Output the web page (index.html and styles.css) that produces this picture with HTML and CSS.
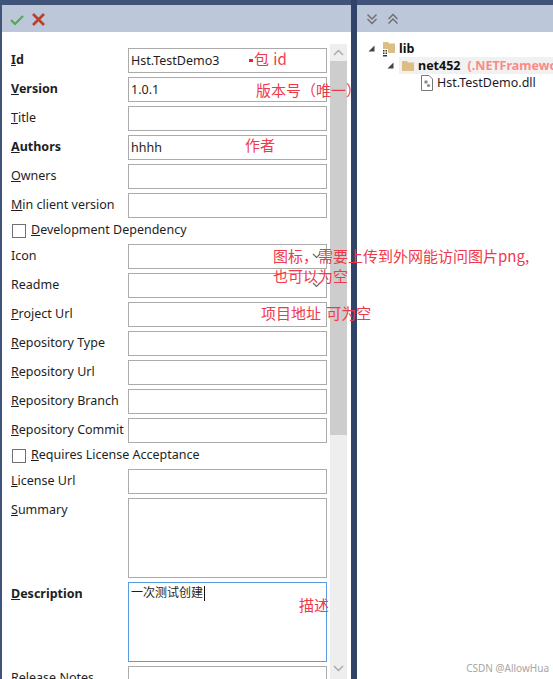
FILE: index.html
```html
<!doctype html>
<html lang="en">
  <head>
    <meta charset="UTF-8" />
    <title>Package Metadata</title>
    <link rel="stylesheet" href="styles.css">
  </head>
  <body>
    <div class="window">
      <div class="pane pane-left">
        <div class="toolbar">
          <svg class="tool" width="14" height="14" viewBox="0 0 14 14"><path d="M1 8 L5 12 L13 4" fill="none" stroke="#52a84e" stroke-width="2"/></svg>
          <svg class="tool" width="14" height="14" viewBox="0 0 14 14"><path d="M2 2 L13 13 M13 2 L2 13" fill="none" stroke="#b5402c" stroke-width="2.6"/></svg>
        </div>
        <div class="pane-body">
          <form class="form">
            <div class="row"><label class="bold"><u>I</u>d</label><div class="input">Hst.TestDemo3</div></div>
            <div class="row"><label class="bold"><u>V</u>ersion</label><div class="input">1.0.1</div></div>
            <div class="row"><label><u>T</u>itle</label><div class="input"></div></div>
            <div class="row"><label class="bold"><u>A</u>uthors</label><div class="input">hhhh</div></div>
            <div class="row"><label><u>O</u>wners</label><div class="input"></div></div>
            <div class="row"><label><u>M</u>in client version</label><div class="input"></div></div>
            <div class="check-row"><span class="checkbox"></span><label><u>D</u>evelopment Dependency</label></div>
            <div class="row"><label>Icon</label><div class="input input-drop"><svg width="9" height="6" viewBox="0 0 9 6"><path d="M1 1 L4.5 4.5 L8 1" fill="none" stroke="#666" stroke-width="1.2"/></svg></div></div>
            <div class="row"><label>Readme</label><div class="input input-drop"><svg width="9" height="6" viewBox="0 0 9 6"><path d="M1 1 L4.5 4.5 L8 1" fill="none" stroke="#666" stroke-width="1.2"/></svg></div></div>
            <div class="row"><label><u>P</u>roject Url</label><div class="input"></div></div>
            <div class="row"><label><u>R</u>epository Type</label><div class="input"></div></div>
            <div class="row"><label><u>R</u>epository Url</label><div class="input"></div></div>
            <div class="row"><label><u>R</u>epository Branch</label><div class="input"></div></div>
            <div class="row"><label><u>R</u>epository Commit</label><div class="input"></div></div>
            <div class="check-row"><span class="checkbox"></span><label><u>R</u>equires License Acceptance</label></div>
            <div class="row"><label><u>L</u>icense Url</label><div class="input"></div></div>
            <div class="row tall"><label><u>S</u>ummary</label><div class="input"></div></div>
            <div class="row tall"><label class="bold"><u>D</u>escription</label><div class="input focused"><span class="cjk">一次测试创建</span><span class="caret"></span></div></div>
            <div class="row"><label>Release Notes</label><div class="input"></div></div>
          </form>
          <div class="scrollbar">
            <div class="arrow"><svg width="11" height="7" viewBox="0 0 11 7"><path d="M1 6 L5.5 1.5 L10 6" fill="none" stroke="#a8a8a8" stroke-width="1.4"/></svg></div>
            <div class="thumb"></div>
            <div class="arrow arrow-down"><svg width="11" height="7" viewBox="0 0 11 7"><path d="M1 1 L5.5 5.5 L10 1" fill="none" stroke="#a8a8a8" stroke-width="1.4"/></svg></div>
          </div>
        </div>
      </div>

      <div class="splitter"></div>

      <div class="pane pane-right">
        <div class="toolbar toolbar-right">
          <svg class="tool" width="12" height="12" viewBox="0 0 12 12"><path d="M1.5 1.5 L6 6 L10.5 1.5 M1.5 6 L6 10.5 L10.5 6" fill="none" stroke="#6d6d6d" stroke-width="1.4"/></svg>
          <svg class="tool" width="12" height="12" viewBox="0 0 12 12"><path d="M1.5 6 L6 1.5 L10.5 6 M1.5 10.5 L6 6 L10.5 10.5" fill="none" stroke="#6d6d6d" stroke-width="1.4"/></svg>
        </div>
        <ul class="tree">
          <li class="node">
            <svg class="twist" width="7" height="7" viewBox="0 0 7 7"><path d="M6.5 0.5 V6.5 H0.5 Z" fill="#444"/></svg>
            <svg class="folder" width="14" height="18" viewBox="0 0 14 18"><path d="M1 2 H6 L7 3.5 H13 V13 H1 Z" fill="#dcbd84"/><rect x="0" y="9" width="6" height="8" fill="#fff"/><rect x="1" y="10" width="1.5" height="1.5" fill="#333"/><rect x="3.5" y="10" width="1.5" height="1.5" fill="#333"/><rect x="1" y="12.5" width="1.5" height="1.5" fill="#333"/><rect x="3.5" y="12.5" width="1.5" height="1.5" fill="#333"/><rect x="1" y="15" width="4" height="1.5" fill="#333"/></svg>
            <span class="name">lib</span>
          </li>
          <li class="node node-framework">
            <svg class="twist" width="7" height="7" viewBox="0 0 7 7"><path d="M6.5 0.5 V6.5 H0.5 Z" fill="#444"/></svg>
            <div class="selected">
              <svg class="folder" width="14" height="12" viewBox="0 0 14 12"><path d="M1 1 H6 L7 2.5 H13 V11 H1 Z" fill="#dcbd84"/></svg>
              <span class="name">net452</span>
              <span class="framework">(.NETFramework,Version=v4.5.2)</span>
            </div>
          </li>
          <li class="node node-file">
            <svg class="file" width="12" height="16" viewBox="0 0 12 16"><path d="M0.5 0.5 H8 L11.5 4 V15.5 H0.5 Z" fill="#fff" stroke="#777"/><circle cx="5" cy="7" r="1.8" fill="#8a8f96"/><circle cx="7.5" cy="10.5" r="1.6" fill="#8a8f96"/></svg>
            <span class="file-name">Hst.TestDemo.dll</span>
          </li>
        </ul>
      </div>

      <span class="note note-id"><i class="dash"></i>包 id</span>
      <span class="note note-version">版本号（唯一）</span>
      <span class="note note-author">作者</span>
      <span class="note note-icon">图标，需要上传到外网能访问图片png,<br>也可以为空</span>
      <span class="note note-project">项目地址 可为空</span>
      <span class="note note-desc">描述</span>
      <span class="watermark">CSDN @AllowHua</span>
    </div>
  </body>
</html>
```

FILE: styles.css
```css
html,
body {
  margin: 0;
  height: 100%;
  overflow: hidden;
}
body {
  font-family: "Noto Sans", "Noto Sans CJK SC", sans-serif;
  font-size: 12.5px;
  color: #1e1e1e;
  background: #3f5478;
}
.window {
  position: relative;
  display: flex;
  width: 553px;
  height: 679px;
  overflow: hidden;
  background: #3f5478;
}
.pane {
  display: flex;
  flex-direction: column;
  margin-top: 5px;
  background: white;
  overflow: hidden;
}
.pane-left {
  width: 349px;
  margin-left: 2px;
}
.pane-right {
  flex: 1;
}
.splitter {
  width: 6px;
  background: #2f4468;
}
.toolbar {
  display: flex;
  align-items: center;
  gap: 7px;
  height: 27px;
  padding-left: 8px;
  background: #bcc7d9;
  flex-shrink: 0;
}
.toolbar-right {
  gap: 9px;
  padding-left: 9px;
}
.pane-body {
  display: flex;
  flex: 1;
  min-height: 0;
}
.form {
  display: flex;
  flex-direction: column;
  gap: 4px;
  width: 316px;
  height: 645px;
  padding: 16px 0 0 9px;
  overflow: hidden;
  flex-shrink: 0;
}
.row {
  display: flex;
  flex-shrink: 0;
  height: 25px;
}
.row.tall {
  height: 80px;
}
.row label {
  width: 117px;
  padding-top: 3px;
  flex-shrink: 0;
  white-space: nowrap;
}
.bold {
  font-weight: 700;
}
.input {
  flex: 1;
  box-sizing: border-box;
  padding: 3px 2px;
  border: 1px solid #ababab;
  background: white;
  white-space: nowrap;
}
.input-drop {
  display: flex;
  justify-content: flex-end;
  padding: 8px 5px 0 0;
}
.input.focused {
  border-color: #569de5;
  padding-top: 0;
}
.caret {
  display: inline-block;
  width: 1px;
  height: 15px;
  margin-left: 1px;
  vertical-align: middle;
  background: #111;
}
.cjk {
  font-family: "Noto Sans CJK SC", sans-serif;
  font-size: 12px;
}
.check-row {
  display: flex;
  flex-shrink: 0;
  align-items: center;
  height: 18px;
  padding-left: 1px;
}
.check-row label {
  margin-top: -4px;
  margin-left: -1px;
}
.checkbox {
  width: 12px;
  height: 12px;
  margin-right: 6px;
  border: 1px solid #707070;
  background: white;
}
.scrollbar {
  display: flex;
  flex-direction: column;
  width: 17px;
  margin: 12px 0 -2px 3px;
  background: #eeeeee;
}
.arrow {
  display: flex;
  align-items: center;
  justify-content: center;
  height: 17px;
  flex-shrink: 0;
}
.thumb {
  height: 374px;
  background: #cdcdcd;
  flex-shrink: 0;
}
.arrow-down {
  margin-top: auto;
  padding-bottom: 4px;
}
.tree {
  list-style: none;
  margin: 0;
  padding: 8px 0 0 0;
}
.node {
  display: flex;
  align-items: center;
  height: 17px;
  padding-left: 11px;
  white-space: nowrap;
}
.node .twist {
  margin-right: 7px;
  flex-shrink: 0;
}
.node .folder {
  flex-shrink: 0;
}
.name {
  margin-left: 3px;
  font-weight: 700;
  color: #111;
}
.node-framework {
  padding-left: 30px;
}
.node-framework .twist {
  margin-right: 5px;
}
.selected {
  display: flex;
  flex: 1;
  align-items: center;
  height: 17px;
  padding-left: 2px;
  overflow: hidden;
  background: #f1f1f1;
}
.framework {
  margin-left: 7px;
  font-weight: 700;
  color: #fb8a86;
}
.node-file {
  padding-left: 64px;
}
.file-name {
  margin-left: 4px;
  color: #1a1a2a;
}
.note {
  position: absolute;
  font-family: "Noto Sans CJK SC", sans-serif;
  font-size: 15px;
  line-height: 22px;
  color: #f0394a;
  white-space: nowrap;
}
.note-id {
  left: 249px;
  top: 48px;
  word-spacing: 1px;
}
.dash {
  display: inline-block;
  width: 4px;
  height: 3px;
  margin-right: 1px;
  vertical-align: middle;
  background: #e8242f;
}
.note-version {
  left: 256px;
  top: 79px;
}
.note-author {
  left: 245px;
  top: 134px;
}
.note-icon {
  left: 273px;
  top: 246px;
  line-height: 20px;
}
.note-project {
  left: 261px;
  top: 302px;
  word-spacing: 2px;
}
.note-desc {
  left: 299px;
  top: 594px;
}
.watermark {
  position: absolute;
  right: 4px;
  bottom: 4px;
  font-size: 10px;
  color: #a6a6a6;
}
```
